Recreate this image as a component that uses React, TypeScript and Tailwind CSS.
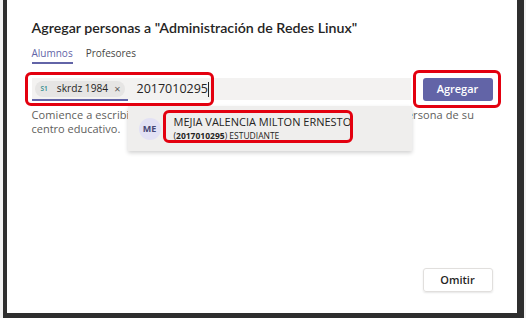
import React from "react";

const font = { fontFamily: '"Open Sans", "Noto Sans", sans-serif' };
const titleFont = { fontFamily: 'Lato, "Open Sans", sans-serif' };

export default function App() {
  return (
    <div className="w-[526px] h-[318px] flex bg-[#f2f2f2] overflow-hidden" style={font}>
      <div className="w-[3px]" />
      <div className="flex-1 flex flex-col border-l-[4px] border-r-[7px] border-b-[5px] border-[#2e2e2e] bg-white relative">
        <div className="flex-1 flex flex-col pl-[25px] pr-[24px] pt-[18px]">
          <div className="text-[14.2px] leading-[20px] font-semibold text-[#252423]" style={titleFont}>
            Agregar personas a "Administración de Redes Linux"
          </div>
          <div className="flex gap-[13px] mt-[8px] text-[10px] leading-[15px]">
            <div className="flex flex-col">
              <span className="text-[#6264a7]">Alumnos</span>
              <div className="h-[2px] bg-[#6264a7] mt-[1px]" />
            </div>
            <span className="text-[#484644]">Profesores</span>
          </div>
          <div className="flex items-start mt-[14px]">
            <div className="w-[379px] h-[22px] bg-[#f3f2f1] flex items-center relative">
              <div className="ml-[3px] w-[90px] h-[16px] pl-[6px] rounded-full bg-[#e6e5e4] flex items-center">
                <span className="text-[6.5px] text-[#2b8a8a] font-semibold">S1</span>
                <span className="ml-[9px] text-[10.2px] text-[#252423]">skrdz 1984</span>
                <span className="ml-[6px] text-[11px] text-[#605e5c]">×</span>
              </div>
              <span className="ml-[12px] text-[12.5px] text-[#252423]">2017010295</span>
              <div className="w-[1px] h-[15px] bg-[#252423]" />
              <div className="absolute left-0 bottom-[-1px] w-[96px] h-[2px] bg-[#6264a7]" />
            </div>
            <div className="ml-[12px] w-[70px] h-[23px] bg-[#6264a7] rounded-[3px] flex items-center justify-center text-white text-[11px] font-semibold">
              Agregar
            </div>
          </div>
          <div className="mt-[7px] text-[11px] leading-[14px] text-[#605e5c]">
            <span className="tracking-[0.1px]">Comience a escribir un nombre o un identificador, para agregar a otra persona de su</span>
            <br />
            centro educativo.
          </div>
          <div className="flex-1" />
          <div className="flex justify-end mb-[21px]">
            <div className="w-[70px] h-[24px] border border-[#e1dfdd] rounded-[3px] shadow-[0_1px_2px_rgba(0,0,0,0.1)] flex items-center justify-center text-[11px] font-semibold text-[#252423]">
              Omitir
            </div>
          </div>
        </div>

        {/* dropdown */}
        <div className="absolute left-[121px] top-[106px] w-[284px] h-[45px] bg-[#efeeed] shadow-[0_2px_4px_rgba(0,0,0,0.18)] flex items-center">
          <div className="ml-[11px] w-[22px] h-[22px] rounded-full bg-[#e2e1f4] flex items-center justify-center text-[9px] font-bold text-[#464775]">
            ME
          </div>
          <div className="ml-[13px] flex flex-col">
            <span className="text-[11px] leading-[14px] text-[#252423]">MEJIA VALENCIA MILTON ERNESTO</span>
            <span className="text-[8.5px] leading-[13px] text-[#252423]">
              (<b>2017010295</b>) ESTUDIANTE
            </span>
          </div>
        </div>

        {/* red annotation boxes */}
        <div className="absolute left-[18px] top-[72px] w-[189px] h-[34px] border-[3px] border-[#e3000f] rounded-[6px]" />
        <div className="absolute left-[156px] top-[110px] w-[190px] h-[33px] border-[3px] border-[#e3000f] rounded-[6px]" />
        <div className="absolute left-[406px] top-[70px] w-[88px] h-[38px] border-[3px] border-[#e3000f] rounded-[6px]" />
      </div>
      <div className="w-[3px]" />
    </div>
  );
}
